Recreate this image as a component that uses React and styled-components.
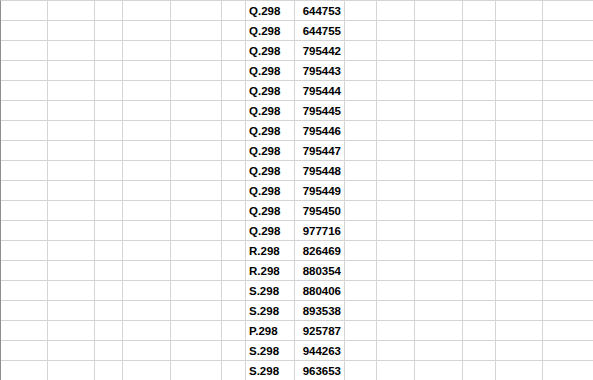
import React from "react";
import styled, { createGlobalStyle } from "styled-components";

const Global = createGlobalStyle`
  html, body { margin: 0; padding: 0; background: #fff; overflow: hidden; }
  body { font-family: "Liberation Sans", Arial, sans-serif; }
`;

const COLS = [47, 47, 28, 48, 51, 24, 49, 50, 32, 38, 48, 33, 47, 60];

const ROWS = [
  ["Q.298", "644753"],
  ["Q.298", "644755"],
  ["Q.298", "795442"],
  ["Q.298", "795443"],
  ["Q.298", "795444"],
  ["Q.298", "795445"],
  ["Q.298", "795446"],
  ["Q.298", "795447"],
  ["Q.298", "795448"],
  ["Q.298", "795449"],
  ["Q.298", "795450"],
  ["Q.298", "977716"],
  ["R.298", "826469"],
  ["R.298", "880354"],
  ["S.298", "880406"],
  ["S.298", "893538"],
  ["P.298", "925787"],
  ["S.298", "944263"],
  ["S.298", "963653"],
];

const Sheet = styled.div`
  display: grid;
  grid-template-columns: ${COLS.map((w) => `${w}px`).join(" ")};
  grid-auto-rows: 20px;
  border-top: 1px solid #d4d4d4;
  border-left: 1px solid #8e8e8e;
  width: max-content;
`;

const Cell = styled.div`
  box-sizing: border-box;
  border-right: 1px solid #d4d4d4;
  border-bottom: 1px solid #d4d4d4;
  font-size: 11.5px;
  font-weight: bold;
  color: #000;
  line-height: 18px;
  padding-top: 1px;
  white-space: nowrap;
  overflow: hidden;
  text-align: ${(p) => (p.$align === "right" ? "right" : "left")};
  padding-left: ${(p) => (p.$align === "left" ? "3px" : "0")};
  padding-right: ${(p) => (p.$align === "right" ? "3px" : "0")};
`;

export default function App() {
  return (
    <>
      <Global />
      <Sheet>
        {ROWS.map(([code, num], r) =>
          COLS.map((_, c) => {
            if (c === 6)
              return (
                <Cell key={`${r}-${c}`} $align="left">
                  {code}
                </Cell>
              );
            if (c === 7)
              return (
                <Cell key={`${r}-${c}`} $align="right">
                  {num}
                </Cell>
              );
            return <Cell key={`${r}-${c}`} />;
          })
        )}
      </Sheet>
    </>
  );
}
